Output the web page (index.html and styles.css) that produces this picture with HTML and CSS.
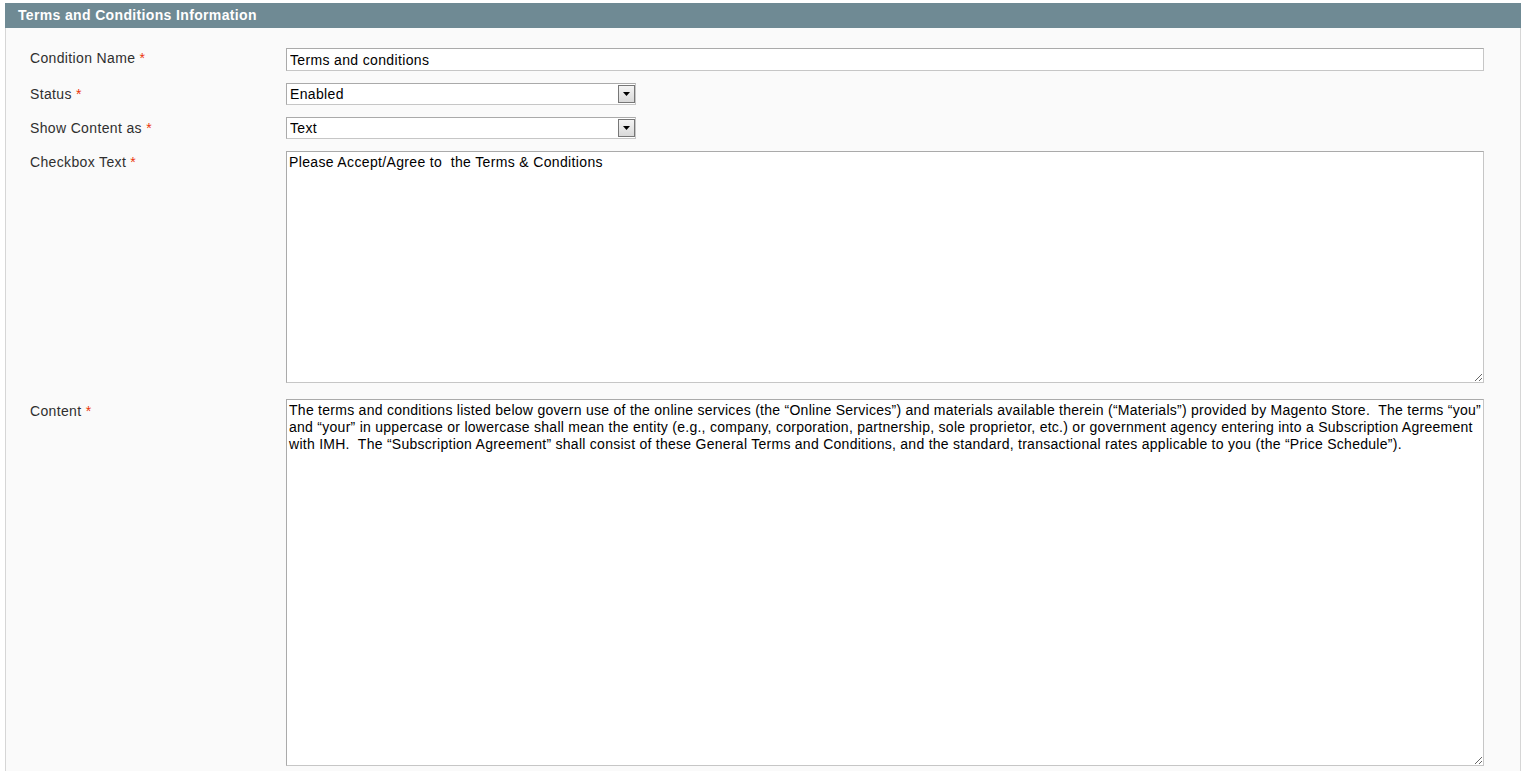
FILE: index.html
```html
<!DOCTYPE html>
<html lang="en">
<head>
  <meta charset="UTF-8" />
  <title>Terms and Conditions Information</title>
  <link rel="stylesheet" href="styles.css">
</head>
<body>
  <div class="entry-edit">
    <!-- Section header -->
    <div class="entry-head">Terms and Conditions Information</div>

    <div class="fieldset">
      <div class="form-row">
        <label for="name">Condition Name <span class="req">*</span></label>
        <input type="text" id="name" class="input-text" value="Terms and conditions" />
      </div>

      <div class="form-row sel">
        <label for="status">Status <span class="req">*</span></label>
        <div class="select-wrap">
          <select id="status">
            <option>Enabled</option><option>Disabled</option>
          </select>
          <span class="select-btn"><svg width="7" height="4" viewBox="0 0 7 4"><path d="M0 0h7L3.5 4z" fill="#000"/></svg></span>
        </div>
      </div>

      <div class="form-row sel">
        <label for="mode">Show Content as <span class="req">*</span></label>
        <div class="select-wrap">
          <select id="mode">
            <option>Text</option><option>HTML</option>
          </select>
          <span class="select-btn"><svg width="7" height="4" viewBox="0 0 7 4"><path d="M0 0h7L3.5 4z" fill="#000"/></svg></span>
        </div>
      </div>

      <div class="form-row">
        <label for="checkbox_text">Checkbox Text <span class="req">*</span></label>
        <textarea id="checkbox_text" class="ta-small">Please Accept/Agree to  the Terms &amp; Conditions</textarea>
      </div>

      <div class="form-row last">
        <label for="content">Content <span class="req">*</span></label>
        <textarea id="content" class="ta-large">The terms and conditions listed below govern use of the online services (the “Online Services”) and materials available therein (“Materials”) provided by Magento Store.  The terms “you” and “your” in uppercase or lowercase shall mean the entity (e.g., company, corporation, partnership, sole proprietor, etc.) or government agency entering into a Subscription Agreement with IMH.  The “Subscription Agreement” shall consist of these General Terms and Conditions, and the standard, transactional rates applicable to you (the “Price Schedule”).</textarea>
      </div>
    </div>
  </div>
</body>
</html>
```

FILE: styles.css
```css
/* Base */
* { box-sizing: border-box; }
body {
  margin: 0; padding: 3px 7px 0 5px; background: #fff;
  font-family: Arial, "Liberation Sans", sans-serif; font-size: 14px; color: #2f2f2f;
  letter-spacing: 0.35px; overflow: hidden;
}

/* Section */
.entry-head {
  height: 25px; background: #6f8a94; color: #fff;
  font-weight: bold; font-size: 14px; line-height: 25px;
  padding-left: 13px;
}
.fieldset {
  background: #fafafa; border: 1px solid #d6d6d6; border-top: 0;
  padding: 20px 36px 10px 24px; height: 760px;
}

/* Rows */
.form-row { display: flex; align-items: flex-start; margin-bottom: 12px; }
.form-row.last { margin-bottom: 0; }
.form-row label { width: 256px; flex: none; padding-top: 2px; line-height: 17px; }
.form-row.sel label { padding-top: 3px; }
.req { color: #eb340a; }

/* Controls */
.input-text, .form-row textarea, .select-wrap select {
  font-family: Arial, "Liberation Sans", sans-serif; font-size: 14px; color: #000;
  letter-spacing: 0.35px;
  background: #fff; border: 1px solid #aaa; border-radius: 0;
  border-color: #aaa #c6c6c6 #c6c6c6 #aaa; outline: none;
}
.input-text { flex: 1; height: 23px; padding: 1px 3px; }

.select-wrap { position: relative; width: 350px; height: 22px; }
.select-wrap select {
  width: 100%; height: 22px; padding: 0 3px; appearance: none; -webkit-appearance: none;
}
.select-btn {
  position: absolute; right: 1px; top: 2px; width: 17px; height: 18px;
  background: linear-gradient(#f4f4f4, #d9d9d9); border: 1px solid #777;
  display: flex; align-items: center; justify-content: center; pointer-events: none;
}

.form-row textarea {
  flex: 1; padding: 2px 1px 2px 2px; line-height: 17px; resize: vertical;
}
.form-row .ta-small { height: 232px; }
.form-row:nth-child(4) { margin-bottom: 11px; }
.form-row:nth-child(4) label { padding-top: 3px; }
.form-row .ta-large { height: 367px; margin-top: 5px; letter-spacing: 0.27px; }
.form-row.last label { padding-top: 9px; }
```
